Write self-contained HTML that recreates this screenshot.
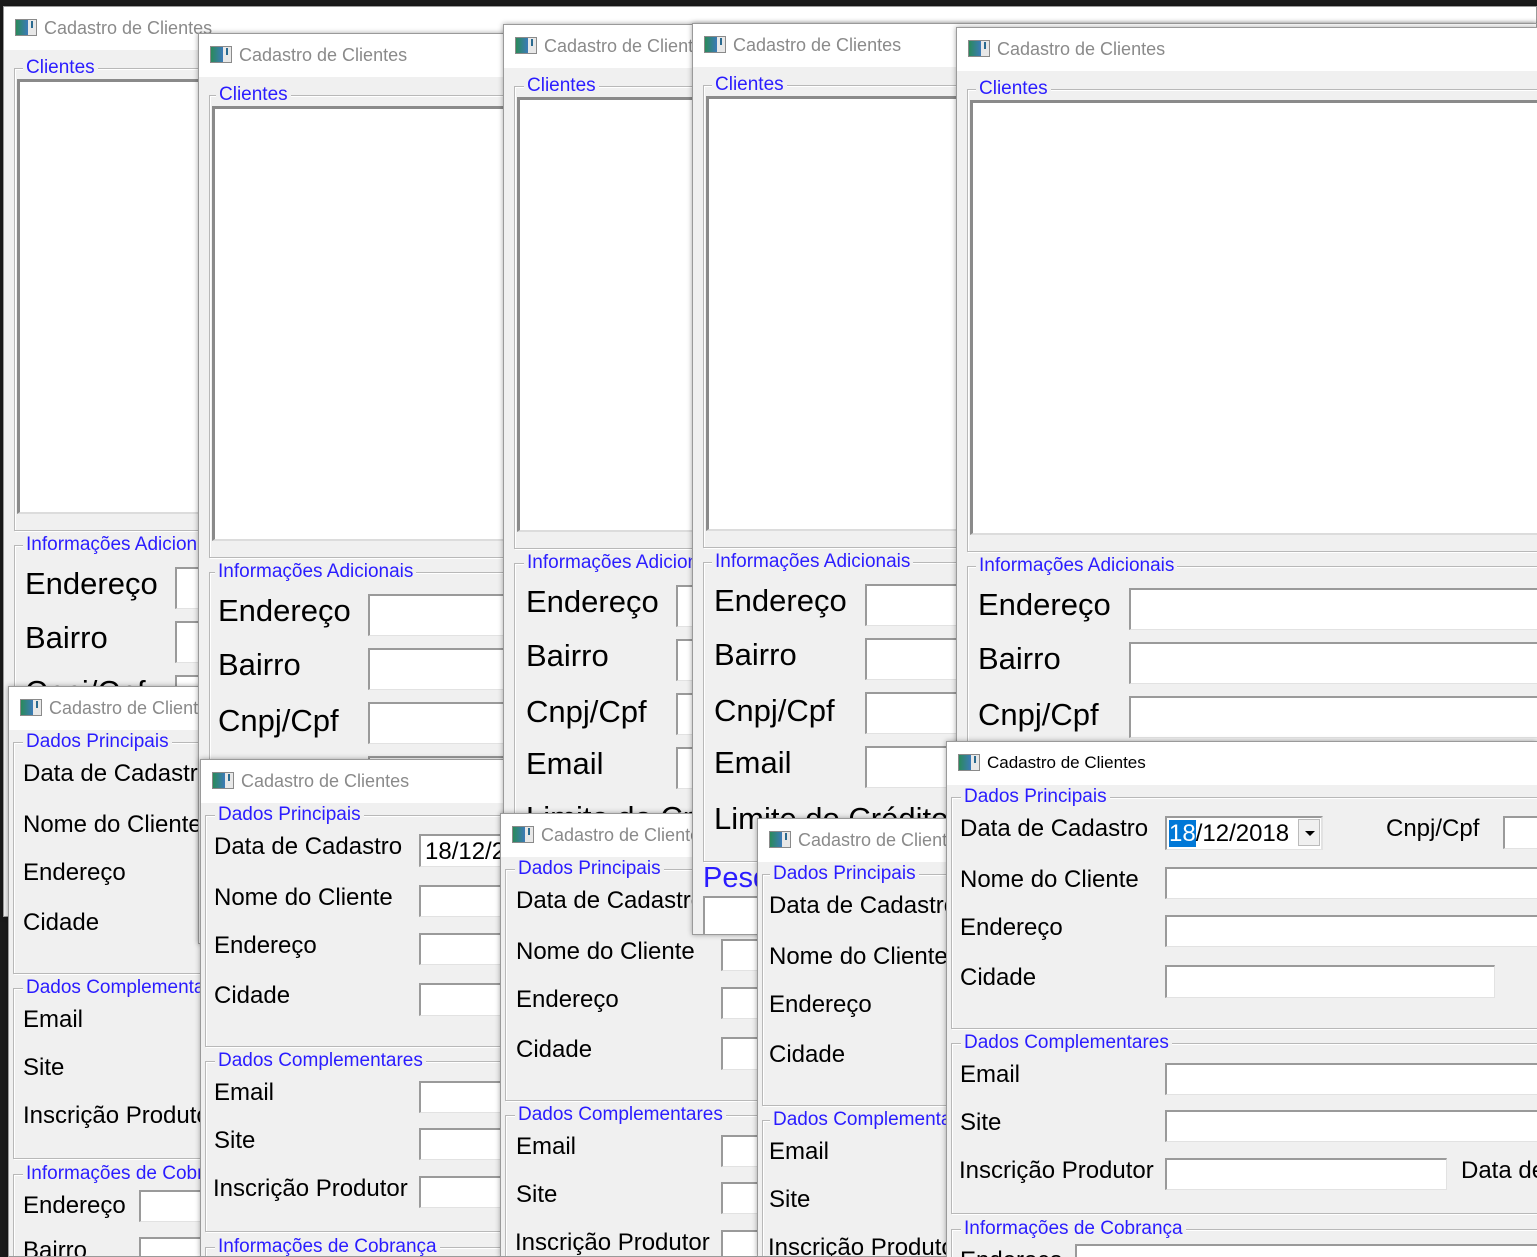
<!DOCTYPE html>
<html><head><meta charset="utf-8"><style>
*{margin:0;padding:0;box-sizing:border-box}
html{width:1537px;height:1257px;overflow:hidden}
body{width:1537px;height:1257px;background:#1b1b1b;position:relative;overflow:hidden;font-family:"Liberation Sans",Arial,sans-serif}
.w{position:absolute;background:#f0f0f0;border:1px solid #9a9a9a;overflow:hidden;box-shadow:0 0 5px rgba(0,0,0,.35)}
.tb{position:absolute;left:0;top:0;right:0;height:43px;background:#fff}
.ic{position:absolute;left:11px;top:12px;width:22px;height:17px;border:1px solid #8a8a8a;background:linear-gradient(90deg,#2a8a5a,#3c7ab8 60%,#e8e8e8 60%)}
.ic:after{content:"";position:absolute;right:3px;top:1px;width:2px;height:7px;background:#2a6a90}
.tt{position:absolute;left:40px;top:11px;font-size:18px;color:#8a8a8a;white-space:nowrap}
.g{position:absolute;border:1px solid #b8b8b8;box-shadow:inset 1px 1px 0 #fff,1px 1px 0 #fff}
.gl{position:absolute;font-size:19px;line-height:20px;color:#2a1cff;background:#f0f0f0;padding:0 3px;white-space:nowrap}
.la{position:absolute;font-size:31px;line-height:32px;color:#000;white-space:nowrap}
.lb{position:absolute;font-size:24px;line-height:26px;color:#000;white-space:nowrap}
.i{position:absolute;background:#fff;border-top:2px solid #9a9a9a;border-left:2px solid #9a9a9a;border-right:1px solid #e2e2e2;border-bottom:1px solid #e2e2e2}
.lst{position:absolute;background:#fff;border-top:3px solid #8a8a8a;border-left:3px solid #8a8a8a;border-bottom:2px solid #dcdcdc;border-right:2px solid #dcdcdc}
</style></head><body>

<!-- A1 -->
<div class="w" style="left:3px;top:6px;width:1534px;height:911px">
<div class="tb"><div class="ic"></div><div class="tt">Cadastro de Clientes</div></div>
<div class="g" style="left:10px;top:61px;width:2000px;height:463px"></div><div class="gl" style="left:19px;top:51px">Clientes</div>
<div class="lst" style="left:13px;top:72px;width:2000px;height:435px"></div>
<div class="g" style="left:10px;top:538px;width:2000px;height:600px"></div><div class="gl" style="left:19px;top:528px">Informações Adicionais</div>
<div class="la" style="left:21px;top:561px">Endereço</div><div class="i" style="left:171px;top:560px;width:2000px;height:42px"></div>
<div class="la" style="left:21px;top:615px">Bairro</div><div class="i" style="left:171px;top:614px;width:2000px;height:42px"></div>
<div class="la" style="left:21px;top:669px">Cnpj/Cpf</div><div class="i" style="left:171px;top:668px;width:2000px;height:42px"></div>
</div>

<!-- B1 -->
<div class="w" style="left:8px;top:686px;width:1529px;height:571px">
<div class="tb"><div class="ic"></div><div class="tt">Cadastro de Clientes</div></div>
<div class="g" style="left:4px;top:55px;width:2000px;height:232px"></div><div class="gl" style="left:14px;top:45px">Dados Principais</div>
<div class="lb" style="left:14px;top:74px">Data de Cadastro</div>
<div class="lb" style="left:14px;top:125px">Nome do Cliente</div>
<div class="lb" style="left:14px;top:173px">Endereço</div>
<div class="lb" style="left:14px;top:223px">Cidade</div>
<div class="g" style="left:4px;top:301px;width:2000px;height:171px"></div><div class="gl" style="left:14px;top:291px">Dados Complementares</div>
<div class="lb" style="left:14px;top:320px">Email</div>
<div class="lb" style="left:14px;top:368px">Site</div>
<div class="lb" style="left:14px;top:416px">Inscrição Produtor</div>
<div class="g" style="left:4px;top:487px;width:2000px;height:200px"></div><div class="gl" style="left:14px;top:477px">Informações de Cobrança</div>
<div class="lb" style="left:14px;top:506px">Endereço</div><div class="i" style="left:130px;top:503px;width:2000px;height:32px"></div>
<div class="lb" style="left:14px;top:551px">Bairro</div><div class="i" style="left:130px;top:550px;width:2000px;height:32px"></div>
</div>

<!-- A2 -->
<div class="w" style="left:198px;top:33px;width:1339px;height:911px">
<div class="tb"><div class="ic"></div><div class="tt">Cadastro de Clientes</div></div>
<div class="g" style="left:10px;top:61px;width:2000px;height:463px"></div><div class="gl" style="left:17px;top:51px">Clientes</div>
<div class="lst" style="left:13px;top:72px;width:2000px;height:435px"></div>
<div class="g" style="left:10px;top:538px;width:2000px;height:600px"></div><div class="gl" style="left:16px;top:528px">Informações Adicionais</div>
<div class="la" style="left:19px;top:561px">Endereço</div><div class="i" style="left:169px;top:560px;width:2000px;height:42px"></div>
<div class="la" style="left:19px;top:615px">Bairro</div><div class="i" style="left:169px;top:614px;width:2000px;height:42px"></div>
<div class="la" style="left:19px;top:671px">Cnpj/Cpf</div><div class="i" style="left:169px;top:668px;width:2000px;height:42px"></div>
<div class="la" style="left:19px;top:725px">Email</div><div class="i" style="left:169px;top:722px;width:2000px;height:42px"></div>
</div>

<!-- B2 -->
<div class="w" style="left:200px;top:759px;width:1337px;height:498px">
<div class="tb"><div class="ic"></div><div class="tt">Cadastro de Clientes</div></div>
<div class="g" style="left:4px;top:55px;width:2000px;height:232px"></div><div class="gl" style="left:14px;top:45px">Dados Principais</div>
<div class="lb" style="left:13px;top:74px">Data de Cadastro</div><div class="i" style="left:218px;top:74px;width:158px;height:33px"><span style="position:absolute;left:4px;top:2px;font-size:24px">18/12/2018</span></div>
<div class="lb" style="left:13px;top:125px">Nome do Cliente</div><div class="i" style="left:218px;top:125px;width:2000px;height:32px"></div>
<div class="lb" style="left:13px;top:173px">Endereço</div><div class="i" style="left:218px;top:173px;width:2000px;height:32px"></div>
<div class="lb" style="left:13px;top:223px">Cidade</div><div class="i" style="left:218px;top:223px;width:330px;height:33px"></div>
<div class="g" style="left:4px;top:301px;width:2000px;height:171px"></div><div class="gl" style="left:14px;top:291px">Dados Complementares</div>
<div class="lb" style="left:13px;top:320px">Email</div><div class="i" style="left:218px;top:321px;width:2000px;height:32px"></div>
<div class="lb" style="left:13px;top:368px">Site</div><div class="i" style="left:218px;top:368px;width:2000px;height:32px"></div>
<div class="lb" style="left:12px;top:416px">Inscrição Produtor</div><div class="i" style="left:218px;top:416px;width:282px;height:32px"></div>
<div class="g" style="left:4px;top:487px;width:2000px;height:200px"></div><div class="gl" style="left:14px;top:477px">Informações de Cobrança</div>
</div>

<!-- A3 -->
<div class="w" style="left:503px;top:24px;width:1034px;height:911px">
<div class="tb"><div class="ic"></div><div class="tt">Cadastro de Clientes</div></div>
<div class="g" style="left:10px;top:61px;width:2000px;height:463px"></div><div class="gl" style="left:20px;top:51px">Clientes</div>
<div class="lst" style="left:13px;top:72px;width:2000px;height:435px"></div>
<div class="g" style="left:10px;top:538px;width:2000px;height:600px"></div><div class="gl" style="left:20px;top:528px">Informações Adicionais</div>
<div class="la" style="left:22px;top:561px">Endereço</div><div class="i" style="left:172px;top:560px;width:2000px;height:42px"></div>
<div class="la" style="left:22px;top:615px">Bairro</div><div class="i" style="left:172px;top:614px;width:2000px;height:42px"></div>
<div class="la" style="left:22px;top:671px">Cnpj/Cpf</div><div class="i" style="left:172px;top:668px;width:2000px;height:42px"></div>
<div class="la" style="left:22px;top:723px">Email</div><div class="i" style="left:172px;top:722px;width:2000px;height:42px"></div>
<div class="la" style="left:22px;top:777px">Limite do Crédito</div>
</div>

<!-- B3 -->
<div class="w" style="left:500px;top:813px;width:1037px;height:444px">
<div class="tb"><div class="ic"></div><div class="tt">Cadastro de Clientes</div></div>
<div class="g" style="left:4px;top:55px;width:2000px;height:232px"></div><div class="gl" style="left:14px;top:45px">Dados Principais</div>
<div class="lb" style="left:15px;top:74px">Data de Cadastro</div>
<div class="lb" style="left:15px;top:125px">Nome do Cliente</div><div class="i" style="left:220px;top:125px;width:2000px;height:32px"></div>
<div class="lb" style="left:15px;top:173px">Endereço</div><div class="i" style="left:220px;top:173px;width:2000px;height:32px"></div>
<div class="lb" style="left:15px;top:223px">Cidade</div><div class="i" style="left:220px;top:223px;width:330px;height:33px"></div>
<div class="g" style="left:4px;top:301px;width:2000px;height:171px"></div><div class="gl" style="left:14px;top:291px">Dados Complementares</div>
<div class="lb" style="left:15px;top:320px">Email</div><div class="i" style="left:220px;top:321px;width:2000px;height:32px"></div>
<div class="lb" style="left:15px;top:368px">Site</div><div class="i" style="left:220px;top:368px;width:2000px;height:32px"></div>
<div class="lb" style="left:14px;top:416px">Inscrição Produtor</div><div class="i" style="left:220px;top:416px;width:282px;height:32px"></div>
</div>

<!-- A4 -->
<div class="w" style="left:692px;top:23px;width:845px;height:912px">
<div class="tb"><div class="ic"></div><div class="tt">Cadastro de Clientes</div></div>
<div class="g" style="left:10px;top:61px;width:2000px;height:463px"></div><div class="gl" style="left:19px;top:51px">Clientes</div>
<div class="lst" style="left:13px;top:72px;width:2000px;height:435px"></div>
<div class="g" style="left:10px;top:538px;width:2000px;height:300px"></div><div class="gl" style="left:19px;top:528px">Informações Adicionais</div>
<div class="la" style="left:21px;top:561px">Endereço</div><div class="i" style="left:172px;top:560px;width:2000px;height:42px"></div>
<div class="la" style="left:21px;top:615px">Bairro</div><div class="i" style="left:172px;top:614px;width:2000px;height:42px"></div>
<div class="la" style="left:21px;top:671px">Cnpj/Cpf</div><div class="i" style="left:172px;top:668px;width:2000px;height:42px"></div>
<div class="la" style="left:21px;top:723px">Email</div><div class="i" style="left:172px;top:722px;width:2000px;height:42px"></div>
<div class="la" style="left:21px;top:779px">Limite do Crédito</div>
<div class="la" style="left:10px;top:838px;color:#2a1cff;font-size:29px">Pesquisar</div>
<div class="i" style="left:10px;top:872px;width:2000px;height:60px"></div>
</div>

<!-- B4 -->
<div class="w" style="left:757px;top:818px;width:780px;height:439px">
<div class="tb"><div class="ic"></div><div class="tt">Cadastro de Clientes</div></div>
<div class="g" style="left:4px;top:55px;width:2000px;height:232px"></div><div class="gl" style="left:12px;top:45px">Dados Principais</div>
<div class="lb" style="left:11px;top:74px">Data de Cadastro</div>
<div class="lb" style="left:11px;top:125px">Nome do Cliente</div>
<div class="lb" style="left:11px;top:173px">Endereço</div>
<div class="lb" style="left:11px;top:223px">Cidade</div>
<div class="g" style="left:4px;top:301px;width:2000px;height:171px"></div><div class="gl" style="left:12px;top:291px">Dados Complementares</div>
<div class="lb" style="left:11px;top:320px">Email</div>
<div class="lb" style="left:11px;top:368px">Site</div>
<div class="lb" style="left:10px;top:416px">Inscrição Produtor</div>
</div>

<!-- A5 -->
<div class="w" style="left:956px;top:27px;width:581px;height:911px;border-right:none">
<div class="tb"><div class="ic"></div><div class="tt">Cadastro de Clientes</div></div>
<div class="g" style="left:10px;top:61px;width:2000px;height:463px"></div><div class="gl" style="left:19px;top:51px">Clientes</div>
<div class="lst" style="left:13px;top:72px;width:2000px;height:435px"></div>
<div class="g" style="left:10px;top:538px;width:2000px;height:600px"></div><div class="gl" style="left:19px;top:528px">Informações Adicionais</div>
<div class="la" style="left:21px;top:561px">Endereço</div><div class="i" style="left:172px;top:560px;width:2000px;height:42px"></div>
<div class="la" style="left:21px;top:615px">Bairro</div><div class="i" style="left:172px;top:614px;width:2000px;height:42px"></div>
<div class="la" style="left:21px;top:671px">Cnpj/Cpf</div><div class="i" style="left:172px;top:668px;width:2000px;height:42px"></div>
</div>

<!-- B5 -->
<div class="w" style="left:946px;top:741px;width:591px;height:516px;border-right:none;border-bottom:none">
<div class="tb"><div class="ic"></div><div class="tt" style="color:#000;font-size:17px;top:11px">Cadastro de Clientes</div></div>
<div class="g" style="left:4px;top:55px;width:2000px;height:232px"></div><div class="gl" style="left:14px;top:45px">Dados Principais</div>
<div class="lb" style="left:13px;top:74px">Data de Cadastro</div>
<div class="i" style="left:218px;top:74px;width:158px;height:34px;border-right:2px solid #e2e2e2"><span style="position:absolute;left:2px;top:3px;font-size:24px;line-height:26px"><span style="background:#0078d7;color:#fff">18</span>/12/2018</span><div style="position:absolute;right:1px;top:1px;width:22px;height:27px;background:#f0f0f0;border:1px solid #bbb"><div style="position:absolute;left:6px;top:11px;border-left:5px solid transparent;border-right:5px solid transparent;border-top:5px solid #000"></div></div></div>
<div class="lb" style="left:439px;top:74px">Cnpj/Cpf</div><div class="i" style="left:556px;top:74px;width:2000px;height:33px"></div>
<div class="lb" style="left:13px;top:125px">Nome do Cliente</div><div class="i" style="left:218px;top:125px;width:2000px;height:32px"></div>
<div class="lb" style="left:13px;top:173px">Endereço</div><div class="i" style="left:218px;top:173px;width:2000px;height:32px"></div>
<div class="lb" style="left:13px;top:223px">Cidade</div><div class="i" style="left:218px;top:223px;width:330px;height:33px"></div>
<div class="g" style="left:4px;top:301px;width:2000px;height:171px"></div><div class="gl" style="left:14px;top:291px">Dados Complementares</div>
<div class="lb" style="left:13px;top:320px">Email</div><div class="i" style="left:218px;top:321px;width:2000px;height:32px"></div>
<div class="lb" style="left:13px;top:368px">Site</div><div class="i" style="left:218px;top:368px;width:2000px;height:32px"></div>
<div class="lb" style="left:12px;top:416px">Inscrição Produtor</div><div class="i" style="left:218px;top:416px;width:282px;height:32px"></div>
<div class="lb" style="left:514px;top:416px">Data de</div>
<div class="g" style="left:4px;top:487px;width:2000px;height:200px"></div><div class="gl" style="left:14px;top:477px">Informações de Cobrança</div>
<div class="lb" style="left:13px;top:506px">Endereço</div><div class="i" style="left:128px;top:502px;width:2000px;height:32px"></div>
</div>

</body></html>
